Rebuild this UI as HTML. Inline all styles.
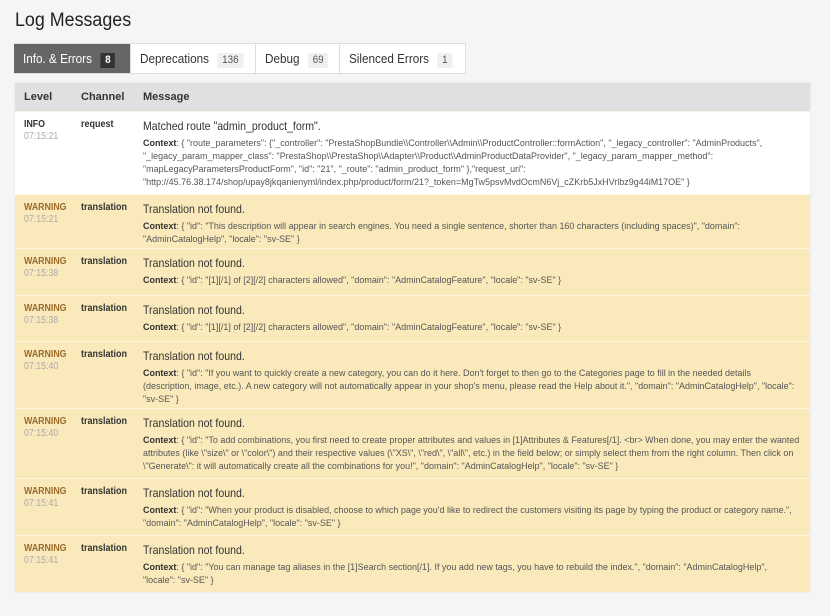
<!DOCTYPE html>
<html><head><meta charset="utf-8"><style>
body{margin:0;background:#f5f5f5;font-family:"Liberation Sans",Arial,sans-serif;color:#333;width:830px;height:616px;overflow:hidden}
.sx{display:inline-block;transform-origin:0 0;white-space:nowrap}
h1{position:absolute;left:15px;top:10px;margin:0;font-size:19px;font-weight:normal;color:#222;transform:scaleX(0.94);transform-origin:0 0}
.tabs{position:absolute;left:14px;top:43px;height:29px;border:1px solid #ddd;border-left:none;background:#fff;width:451px}
.tab{position:absolute;top:0;height:29px;line-height:29px;font-size:13px;color:#333;border-left:1px solid #ddd;white-space:nowrap;box-sizing:border-box}
.tab .sx{transform:scaleX(0.9);padding-left:10px}
.tab.act{background:#666;color:#fff;border-left:none}
.b{display:inline-block;font-size:11px;line-height:15px;padding:0 5px;margin-left:6px;background:#f0f0f0;color:#555}
.act .b{background:#333;color:#fff;font-weight:bold}
.tbl{position:absolute;left:15px;top:83px;width:795px;background:#fff;box-shadow:0 0 1px #ccc}
.hd{height:28px;background:#e0e0e0;font-size:11px;font-weight:bold;position:relative}
.hd span{position:absolute;top:8px}
.row{position:relative;border-top:1px solid #f7f3e6;box-sizing:border-box}
.row.w{background:#faeabb;border-top:1px solid #fff8df}
.lv{position:absolute;left:9px;top:7px;font-size:10px;font-weight:bold;line-height:12px;transform:scaleX(0.88);transform-origin:0 0}
.w .lv{color:#9b6b2c}
.tm{display:block;font-weight:normal;color:#aaa}
.ch{position:absolute;left:66px;top:7px;font-size:10px;font-weight:bold;line-height:12px;transform:scaleX(0.9);transform-origin:0 0}
.ms{position:absolute;left:128px;top:6px;white-space:nowrap}
.tt{font-size:12px;line-height:16px;display:block;transform:scaleX(0.88);transform-origin:0 0}
.cx{font-size:9.6px;line-height:13px;color:#555;margin-top:3px;white-space:nowrap;transform:scaleX(0.935);transform-origin:0 0}
.cx b{color:#333}
</style></head><body>
<h1>Log Messages</h1>
<div class="tabs">
<div class="tab act" style="left:0;width:116px"><span class="sx">Info. &amp; Errors <span class="b">8</span></span></div>
<div class="tab" style="left:116px;width:125px"><span class="sx">Deprecations <span class="b">136</span></span></div>
<div class="tab" style="left:241px;width:84px"><span class="sx">Debug <span class="b">69</span></span></div>
<div class="tab" style="left:325px;width:126px"><span class="sx">Silenced Errors <span class="b">1</span></span></div>
</div>
<div class="tbl">
<div class="hd"><span style="left:9px">Level</span><span style="left:66px">Channel</span><span style="left:128px">Message</span></div>
<div class="row" style="height:83px"><div class="lv">INFO<span class="tm">07:15:21</span></div><div class="ch">request</div><div class="ms"><span class="tt">Matched route "admin_product_form".</span><div class="cx"><b>Context</b>: { "route_parameters": {"_controller": "PrestaShopBundle\\Controller\\Admin\\ProductController::formAction", "_legacy_controller": "AdminProducts",<br>"_legacy_param_mapper_class": "PrestaShop\\PrestaShop\\Adapter\\Product\\AdminProductDataProvider", "_legacy_param_mapper_method":<br>"mapLegacyParametersProductForm", "id": "21", "_route": "admin_product_form" },"request_uri":<br>"http://45.76.38.174/shop/upay8jkqanienyml/index.php/product/form/21?_token=MgTw5psvMvdOcmN6Vj_cZKrb5JxHVrlbz9g44iM17OE" }</div></div></div>
<div class="row w" style="height:54px"><div class="lv">WARNING<span class="tm">07:15:21</span></div><div class="ch">translation</div><div class="ms"><span class="tt">Translation not found.</span><div class="cx"><b>Context</b>: { "id": "This description will appear in search engines. You need a single sentence, shorter than 160 characters (including spaces)", "domain":<br>"AdminCatalogHelp", "locale": "sv-SE" }</div></div></div>
<div class="row w" style="height:47px"><div class="lv">WARNING<span class="tm">07:15:38</span></div><div class="ch">translation</div><div class="ms"><span class="tt">Translation not found.</span><div class="cx"><b>Context</b>: { "id": "[1][/1] of [2][/2] characters allowed", "domain": "AdminCatalogFeature", "locale": "sv-SE" }</div></div></div>
<div class="row w" style="height:46px"><div class="lv">WARNING<span class="tm">07:15:38</span></div><div class="ch">translation</div><div class="ms"><span class="tt">Translation not found.</span><div class="cx"><b>Context</b>: { "id": "[1][/1] of [2][/2] characters allowed", "domain": "AdminCatalogFeature", "locale": "sv-SE" }</div></div></div>
<div class="row w" style="height:67px"><div class="lv">WARNING<span class="tm">07:15:40</span></div><div class="ch">translation</div><div class="ms"><span class="tt">Translation not found.</span><div class="cx"><b>Context</b>: { "id": "If you want to quickly create a new category, you can do it here. Don't forget to then go to the Categories page to fill in the needed details<br>(description, image, etc.). A new category will not automatically appear in your shop's menu, please read the Help about it.", "domain": "AdminCatalogHelp", "locale":<br>"sv-SE" }</div></div></div>
<div class="row w" style="height:70px"><div class="lv">WARNING<span class="tm">07:15:40</span></div><div class="ch">translation</div><div class="ms"><span class="tt">Translation not found.</span><div class="cx"><b>Context</b>: { "id": "To add combinations, you first need to create proper attributes and values in [1]Attributes &amp; Features[/1]. &lt;br&gt; When done, you may enter the wanted<br>attributes (like \"size\" or \"color\") and their respective values (\"XS\", \"red\", \"all\", etc.) in the field below; or simply select them from the right column. Then click on<br>\"Generate\": it will automatically create all the combinations for you!", "domain": "AdminCatalogHelp", "locale": "sv-SE" }</div></div></div>
<div class="row w" style="height:57px"><div class="lv">WARNING<span class="tm">07:15:41</span></div><div class="ch">translation</div><div class="ms"><span class="tt">Translation not found.</span><div class="cx"><b>Context</b>: { "id": "When your product is disabled, choose to which page you'd like to redirect the customers visiting its page by typing the product or category name.",<br>"domain": "AdminCatalogHelp", "locale": "sv-SE" }</div></div></div>
<div class="row w" style="height:57px"><div class="lv">WARNING<span class="tm">07:15:41</span></div><div class="ch">translation</div><div class="ms"><span class="tt">Translation not found.</span><div class="cx"><b>Context</b>: { "id": "You can manage tag aliases in the [1]Search section[/1]. If you add new tags, you have to rebuild the index.", "domain": "AdminCatalogHelp",<br>"locale": "sv-SE" }</div></div></div>
</div>
</body></html>
